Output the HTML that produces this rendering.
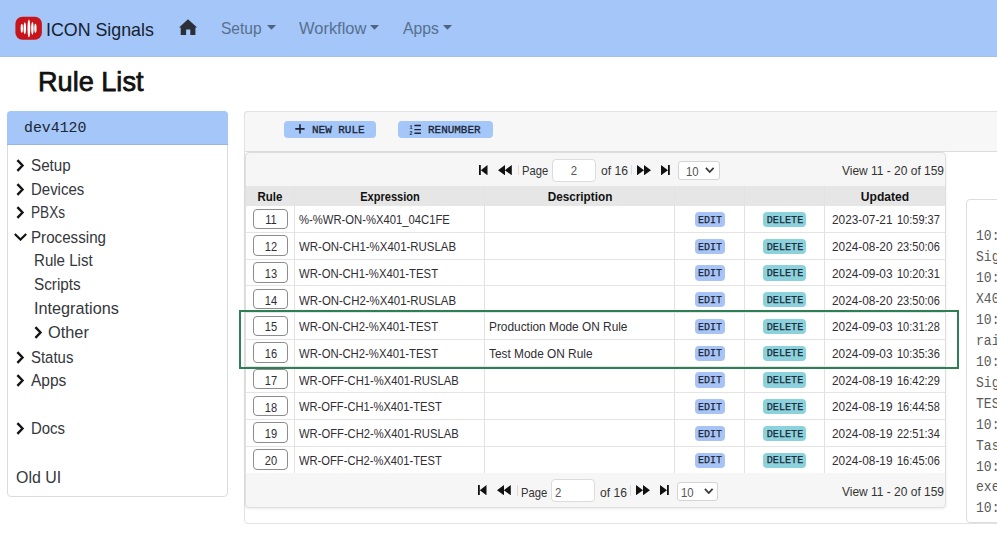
<!DOCTYPE html>
<html><head><meta charset="utf-8"><style>
html,body{margin:0;padding:0;width:997px;height:551px;overflow:hidden;background:#fff;}
.t{position:absolute;white-space:pre;}
.b{position:absolute;}
</style></head><body>
<div class="b" style="left:0.00px;top:0.00px;width:997.00px;height:57.00px;background:#a4c6f8;"></div>
<div class="b" style="left:0.00px;top:56.00px;width:997.00px;height:1.00px;background:#a1c0ef;"></div>
<svg class="b" style="left:15px;top:16px" width="27" height="25" viewBox="0 0 27 25">
<rect x="0.4" y="0.7" width="26.5" height="23.1" rx="7" fill="#c8151c"/>
<g fill="#fff">
<ellipse cx="6.8" cy="12.3" rx="1.15" ry="4.4"/><ellipse cx="9.8" cy="12.3" rx="1.25" ry="6"/><ellipse cx="13.9" cy="12.4" rx="1.4" ry="9"/>
<ellipse cx="17.4" cy="12.3" rx="1.25" ry="6.4"/><ellipse cx="20.4" cy="12.3" rx="1.15" ry="4.6"/>
</g></svg>
<div class="t" style="left:45.50px;top:20.25px;font-family:'Liberation Sans', sans-serif;font-size:17.8px;line-height:21.36px;font-weight:400;color:#17212e;transform:scaleX(1.0016);transform-origin:left center;">ICON Signals</div>
<svg class="b" style="left:179px;top:19px" width="19" height="17" viewBox="0 0 19 17">
<path d="M9 0.3 L18.1 8.6 L16.4 8.6 L16.4 15.9 L11.3 15.9 L11.3 10.6 L7.1 10.6 L7.1 15.9 L1.7 15.9 L1.7 8.6 L0 8.6 Z" fill="#2b3038"/></svg>
<div class="t" style="left:221.20px;top:18.51px;font-family:'Liberation Sans', sans-serif;font-size:17px;line-height:20.40px;font-weight:400;color:#58708f;transform:scaleX(0.9139);transform-origin:left center;">Setup</div>
<svg class="b" style="left:266.6px;top:25.0px" width="9" height="5" viewBox="0 0 9 5"><path d="M0 0 L9 0 L4.5 4.8 Z" fill="#4e6482"/></svg>
<div class="t" style="left:299.00px;top:18.51px;font-family:'Liberation Sans', sans-serif;font-size:17px;line-height:20.40px;font-weight:400;color:#58708f;transform:scaleX(0.9686);transform-origin:left center;">Workflow</div>
<svg class="b" style="left:369.9px;top:25.0px" width="9" height="5" viewBox="0 0 9 5"><path d="M0 0 L9 0 L4.5 4.8 Z" fill="#4e6482"/></svg>
<div class="t" style="left:403.00px;top:18.51px;font-family:'Liberation Sans', sans-serif;font-size:17px;line-height:20.40px;font-weight:400;color:#58708f;transform:scaleX(0.9290);transform-origin:left center;">Apps</div>
<svg class="b" style="left:443.4px;top:25.0px" width="9" height="5" viewBox="0 0 9 5"><path d="M0 0 L9 0 L4.5 4.8 Z" fill="#4e6482"/></svg>
<div class="t" style="left:37.60px;top:65.48px;font-family:'Liberation Sans', sans-serif;font-size:27.6px;line-height:33.12px;font-weight:400;color:#111;-webkit-text-stroke:0.75px #111;transform:scaleX(0.9825);transform-origin:left center;">Rule List</div>
<div class="b" style="left:7.30px;top:111.00px;width:220.30px;height:385.80px;border:1px solid #dcdcdc;border-radius:4px;background:#fff;box-sizing:border-box;"></div>
<div class="b" style="left:7.30px;top:111.00px;width:220.30px;height:33.80px;background:#a4c6f8;border-radius:4px 4px 0 0;border-bottom:1px solid #95b6e6;box-sizing:border-box;"></div>
<div class="t" style="left:23.80px;top:119.85px;font-family:'Liberation Mono', monospace;font-size:14.6px;line-height:17.52px;font-weight:400;color:#1c2733;transform:scaleX(1.0191);transform-origin:left center;">dev4120</div>
<svg class="b" style="left:16.2px;top:158.9px" width="9" height="13" viewBox="0 0 9 13"><path d="M1.4 1.1 L6.5 6.5 L1.4 11.9" fill="none" stroke="#151515" stroke-width="2.4"/></svg>
<div class="t" style="left:30.60px;top:155.90px;font-family:'Liberation Sans', sans-serif;font-size:16.8px;line-height:20.16px;font-weight:400;color:#34373c;transform:scaleX(0.9065);transform-origin:left center;">Setup</div>
<svg class="b" style="left:16.2px;top:182.7px" width="9" height="13" viewBox="0 0 9 13"><path d="M1.4 1.1 L6.5 6.5 L1.4 11.9" fill="none" stroke="#151515" stroke-width="2.4"/></svg>
<div class="t" style="left:30.60px;top:179.70px;font-family:'Liberation Sans', sans-serif;font-size:16.8px;line-height:20.16px;font-weight:400;color:#34373c;transform:scaleX(0.8920);transform-origin:left center;">Devices</div>
<svg class="b" style="left:16.2px;top:205.9px" width="9" height="13" viewBox="0 0 9 13"><path d="M1.4 1.1 L6.5 6.5 L1.4 11.9" fill="none" stroke="#151515" stroke-width="2.4"/></svg>
<div class="t" style="left:30.60px;top:202.90px;font-family:'Liberation Sans', sans-serif;font-size:16.8px;line-height:20.16px;font-weight:400;color:#34373c;transform:scaleX(0.8115);transform-origin:left center;">PBXs</div>
<svg class="b" style="left:13.6px;top:233.0px" width="13" height="8" viewBox="0 0 13 8"><path d="M0.8 1 L6.5 6.6 L12.2 1" fill="none" stroke="#111" stroke-width="2.1"/></svg>
<div class="t" style="left:30.60px;top:227.60px;font-family:'Liberation Sans', sans-serif;font-size:16.8px;line-height:20.16px;font-weight:400;color:#34373c;transform:scaleX(0.9036);transform-origin:left center;">Processing</div>
<div class="t" style="left:33.80px;top:251.10px;font-family:'Liberation Sans', sans-serif;font-size:16.8px;line-height:20.16px;font-weight:400;color:#34373c;transform:scaleX(0.8981);transform-origin:left center;">Rule List</div>
<div class="t" style="left:33.80px;top:274.80px;font-family:'Liberation Sans', sans-serif;font-size:16.8px;line-height:20.16px;font-weight:400;color:#34373c;transform:scaleX(0.9115);transform-origin:left center;">Scripts</div>
<div class="t" style="left:33.80px;top:299.40px;font-family:'Liberation Sans', sans-serif;font-size:16.8px;line-height:20.16px;font-weight:400;color:#34373c;transform:scaleX(0.9671);transform-origin:left center;">Integrations</div>
<svg class="b" style="left:34.2px;top:325.6px" width="9" height="13" viewBox="0 0 9 13"><path d="M1.4 1.1 L6.5 6.5 L1.4 11.9" fill="none" stroke="#151515" stroke-width="2.4"/></svg>
<div class="t" style="left:48.00px;top:322.60px;font-family:'Liberation Sans', sans-serif;font-size:16.8px;line-height:20.16px;font-weight:400;color:#34373c;transform:scaleX(0.9734);transform-origin:left center;">Other</div>
<svg class="b" style="left:16.2px;top:350.7px" width="9" height="13" viewBox="0 0 9 13"><path d="M1.4 1.1 L6.5 6.5 L1.4 11.9" fill="none" stroke="#151515" stroke-width="2.4"/></svg>
<div class="t" style="left:30.60px;top:347.70px;font-family:'Liberation Sans', sans-serif;font-size:16.8px;line-height:20.16px;font-weight:400;color:#34373c;transform:scaleX(0.8902);transform-origin:left center;">Status</div>
<svg class="b" style="left:16.2px;top:374.2px" width="9" height="13" viewBox="0 0 9 13"><path d="M1.4 1.1 L6.5 6.5 L1.4 11.9" fill="none" stroke="#151515" stroke-width="2.4"/></svg>
<div class="t" style="left:30.60px;top:371.20px;font-family:'Liberation Sans', sans-serif;font-size:16.8px;line-height:20.16px;font-weight:400;color:#34373c;transform:scaleX(0.9244);transform-origin:left center;">Apps</div>
<svg class="b" style="left:16.2px;top:422.1px" width="9" height="13" viewBox="0 0 9 13"><path d="M1.4 1.1 L6.5 6.5 L1.4 11.9" fill="none" stroke="#151515" stroke-width="2.4"/></svg>
<div class="t" style="left:30.60px;top:419.10px;font-family:'Liberation Sans', sans-serif;font-size:16.8px;line-height:20.16px;font-weight:400;color:#34373c;transform:scaleX(0.8909);transform-origin:left center;">Docs</div>
<div class="t" style="left:15.50px;top:468.20px;font-family:'Liberation Sans', sans-serif;font-size:16.8px;line-height:20.16px;font-weight:400;color:#34373c;transform:scaleX(0.9494);transform-origin:left center;">Old UI</div>
<div class="b" style="left:244.00px;top:111.00px;width:766.00px;height:413.30px;border:1px solid #e2e2e2;border-radius:4px;background:#fff;box-sizing:border-box;"></div>
<div class="b" style="left:244.00px;top:111.00px;width:766.00px;height:41.00px;background:#f7f7f7;border:1px solid #e2e2e2;border-bottom:1px solid #dcdcdc;border-radius:4px 4px 0 0;box-sizing:border-box;"></div>
<div class="b" style="left:283.80px;top:121.20px;width:92.20px;height:16.40px;background:#a4c6f8;border-radius:4px;"></div>
<svg class="b" style="left:295px;top:124.2px" width="10" height="10" viewBox="0 0 10 10"><path d="M5 0.3 V9.5 M0.3 4.9 H9.6" stroke="#1d2533" stroke-width="1.6"/></svg>
<div class="t" style="left:311.60px;top:123.90px;font-family:'Liberation Mono', monospace;font-size:11.2px;line-height:13.44px;font-weight:400;color:#1a2331;-webkit-text-stroke:0.3px #1a2331;transform:scaleX(0.9783);transform-origin:left center;">NEW RULE</div>
<div class="b" style="left:398.00px;top:121.20px;width:94.50px;height:16.40px;background:#a4c6f8;border-radius:4px;"></div>
<svg class="b" style="left:409px;top:123.5px" width="13" height="12" viewBox="0 0 13 12">
<path d="M5.4 1.5 H11.9 M5.4 5.6 H11.9 M5.4 9.3 H11.9" stroke="#1d2533" stroke-width="1.4"/>
<text x="0.6" y="4.6" font-family="Liberation Mono" font-size="5" font-weight="700" fill="#1d2533">1</text>
<text x="0.6" y="11" font-family="Liberation Mono" font-size="5" font-weight="700" fill="#1d2533">2</text></svg>
<div class="t" style="left:428.10px;top:123.90px;font-family:'Liberation Mono', monospace;font-size:11.2px;line-height:13.44px;font-weight:400;color:#1a2331;-webkit-text-stroke:0.3px #1a2331;transform:scaleX(0.9783);transform-origin:left center;">RENUMBER</div>
<div class="b" style="left:244.90px;top:152.00px;width:701.30px;height:356.20px;border:1px solid #dedede;border-radius:4px;background:#f6f6f6;box-sizing:border-box;box-shadow:0 1px 3px rgba(0,0,0,0.08);"></div>
<div class="b" style="left:245.90px;top:186.30px;width:699.30px;height:19.40px;background:#e6e6e6;"></div>
<div class="b" style="left:245.90px;top:205.70px;width:699.30px;height:267.30px;background:#fff;"></div>
<div class="b" style="left:245.90px;top:231.93px;width:699.30px;height:1.00px;background:#e4e4e4;"></div>
<div class="b" style="left:245.90px;top:258.66px;width:699.30px;height:1.00px;background:#e4e4e4;"></div>
<div class="b" style="left:245.90px;top:285.39px;width:699.30px;height:1.00px;background:#e4e4e4;"></div>
<div class="b" style="left:245.90px;top:312.12px;width:699.30px;height:1.00px;background:#e4e4e4;"></div>
<div class="b" style="left:245.90px;top:338.85px;width:699.30px;height:1.00px;background:#e4e4e4;"></div>
<div class="b" style="left:245.90px;top:365.58px;width:699.30px;height:1.00px;background:#e4e4e4;"></div>
<div class="b" style="left:245.90px;top:392.31px;width:699.30px;height:1.00px;background:#e4e4e4;"></div>
<div class="b" style="left:245.90px;top:419.04px;width:699.30px;height:1.00px;background:#e4e4e4;"></div>
<div class="b" style="left:245.90px;top:445.77px;width:699.30px;height:1.00px;background:#e4e4e4;"></div>
<div class="b" style="left:293.80px;top:186.30px;width:1.00px;height:286.70px;background:#e2e2e2;"></div>
<div class="b" style="left:484.30px;top:186.30px;width:1.00px;height:286.70px;background:#e2e2e2;"></div>
<div class="b" style="left:673.90px;top:186.30px;width:1.00px;height:286.70px;background:#e2e2e2;"></div>
<div class="b" style="left:744.10px;top:186.30px;width:1.00px;height:286.70px;background:#e2e2e2;"></div>
<div class="b" style="left:824.10px;top:186.30px;width:1.00px;height:286.70px;background:#e2e2e2;"></div>
<div class="t" style="left:69.60px;width:400px;text-align:center;top:189.29px;font-family:'Liberation Sans', sans-serif;font-size:12.9px;line-height:15.48px;font-weight:700;color:#111;transform:scaleX(0.8907);transform-origin:center center;">Rule</div>
<div class="t" style="left:189.55px;width:400px;text-align:center;top:189.29px;font-family:'Liberation Sans', sans-serif;font-size:12.9px;line-height:15.48px;font-weight:700;color:#111;transform:scaleX(0.8570);transform-origin:center center;">Expression</div>
<div class="t" style="left:379.60px;width:400px;text-align:center;top:189.29px;font-family:'Liberation Sans', sans-serif;font-size:12.9px;line-height:15.48px;font-weight:700;color:#111;transform:scaleX(0.9117);transform-origin:center center;">Description</div>
<div class="t" style="left:685.40px;width:400px;text-align:center;top:189.29px;font-family:'Liberation Sans', sans-serif;font-size:12.9px;line-height:15.48px;font-weight:700;color:#111;transform:scaleX(0.9379);transform-origin:center center;">Updated</div>
<div class="b" style="left:252.60px;top:208.60px;width:35.00px;height:20.50px;border:1px solid #8c8c8c;border-radius:4px;box-sizing:border-box;background:#fff;"></div>
<div class="t" style="left:70.50px;width:400px;text-align:center;top:213.47px;font-family:'Liberation Sans', sans-serif;font-size:12.6px;line-height:15.12px;font-weight:400;color:#302d33;transform:scaleX(0.8800);transform-origin:center center;">11</div>
<div class="t" style="left:298.60px;top:213.38px;font-family:'Liberation Sans', sans-serif;font-size:12.7px;line-height:15.24px;font-weight:400;color:#302d33;transform:scaleX(0.8878);transform-origin:left center;">%-%WR-ON-%X401_04C1FE</div>
<div class="b" style="left:694.50px;top:212.00px;width:30.50px;height:15.20px;background:#a8c4f6;border-radius:4px;"></div>
<div class="t" style="left:509.75px;width:400px;text-align:center;top:213.82px;font-family:'Liberation Mono', monospace;font-size:11.4px;line-height:13.68px;font-weight:400;color:#1a2533;-webkit-text-stroke:0.25px #1a2533;transform:scaleX(0.8760);transform-origin:center center;">EDIT</div>
<div class="b" style="left:763.00px;top:212.00px;width:43.00px;height:15.20px;background:#8cd2dd;border-radius:4px;"></div>
<div class="t" style="left:584.50px;width:400px;text-align:center;top:213.82px;font-family:'Liberation Mono', monospace;font-size:11.4px;line-height:13.68px;font-weight:400;color:#1a2533;-webkit-text-stroke:0.25px #1a2533;transform:scaleX(0.8900);transform-origin:center center;">DELETE</div>
<div class="t" style="left:831.60px;top:213.38px;font-family:'Liberation Sans', sans-serif;font-size:12.7px;line-height:15.24px;font-weight:400;color:#302d33;transform:scaleX(0.9328);transform-origin:left center;">2023-07-21</div>
<div class="t" style="left:897.30px;top:213.38px;font-family:'Liberation Sans', sans-serif;font-size:12.7px;line-height:15.24px;font-weight:400;color:#302d33;transform:scaleX(0.8658);transform-origin:left center;">10:59:37</div>
<div class="b" style="left:252.60px;top:235.33px;width:35.00px;height:20.50px;border:1px solid #8c8c8c;border-radius:4px;box-sizing:border-box;background:#fff;"></div>
<div class="t" style="left:70.50px;width:400px;text-align:center;top:240.20px;font-family:'Liberation Sans', sans-serif;font-size:12.6px;line-height:15.12px;font-weight:400;color:#302d33;transform:scaleX(0.8800);transform-origin:center center;">12</div>
<div class="t" style="left:298.60px;top:240.11px;font-family:'Liberation Sans', sans-serif;font-size:12.7px;line-height:15.24px;font-weight:400;color:#302d33;transform:scaleX(0.9024);transform-origin:left center;">WR-ON-CH1-%X401-RUSLAB</div>
<div class="b" style="left:694.50px;top:238.73px;width:30.50px;height:15.20px;background:#a8c4f6;border-radius:4px;"></div>
<div class="t" style="left:509.75px;width:400px;text-align:center;top:240.55px;font-family:'Liberation Mono', monospace;font-size:11.4px;line-height:13.68px;font-weight:400;color:#1a2533;-webkit-text-stroke:0.25px #1a2533;transform:scaleX(0.8760);transform-origin:center center;">EDIT</div>
<div class="b" style="left:763.00px;top:238.73px;width:43.00px;height:15.20px;background:#8cd2dd;border-radius:4px;"></div>
<div class="t" style="left:584.50px;width:400px;text-align:center;top:240.55px;font-family:'Liberation Mono', monospace;font-size:11.4px;line-height:13.68px;font-weight:400;color:#1a2533;-webkit-text-stroke:0.25px #1a2533;transform:scaleX(0.8900);transform-origin:center center;">DELETE</div>
<div class="t" style="left:831.60px;top:240.11px;font-family:'Liberation Sans', sans-serif;font-size:12.7px;line-height:15.24px;font-weight:400;color:#302d33;transform:scaleX(0.9328);transform-origin:left center;">2024-08-20</div>
<div class="t" style="left:897.30px;top:240.11px;font-family:'Liberation Sans', sans-serif;font-size:12.7px;line-height:15.24px;font-weight:400;color:#302d33;transform:scaleX(0.8658);transform-origin:left center;">23:50:06</div>
<div class="b" style="left:252.60px;top:262.06px;width:35.00px;height:20.50px;border:1px solid #8c8c8c;border-radius:4px;box-sizing:border-box;background:#fff;"></div>
<div class="t" style="left:70.50px;width:400px;text-align:center;top:266.93px;font-family:'Liberation Sans', sans-serif;font-size:12.6px;line-height:15.12px;font-weight:400;color:#302d33;transform:scaleX(0.8800);transform-origin:center center;">13</div>
<div class="t" style="left:298.60px;top:266.84px;font-family:'Liberation Sans', sans-serif;font-size:12.7px;line-height:15.24px;font-weight:400;color:#302d33;transform:scaleX(0.8926);transform-origin:left center;">WR-ON-CH1-%X401-TEST</div>
<div class="b" style="left:694.50px;top:265.46px;width:30.50px;height:15.20px;background:#a8c4f6;border-radius:4px;"></div>
<div class="t" style="left:509.75px;width:400px;text-align:center;top:267.28px;font-family:'Liberation Mono', monospace;font-size:11.4px;line-height:13.68px;font-weight:400;color:#1a2533;-webkit-text-stroke:0.25px #1a2533;transform:scaleX(0.8760);transform-origin:center center;">EDIT</div>
<div class="b" style="left:763.00px;top:265.46px;width:43.00px;height:15.20px;background:#8cd2dd;border-radius:4px;"></div>
<div class="t" style="left:584.50px;width:400px;text-align:center;top:267.28px;font-family:'Liberation Mono', monospace;font-size:11.4px;line-height:13.68px;font-weight:400;color:#1a2533;-webkit-text-stroke:0.25px #1a2533;transform:scaleX(0.8900);transform-origin:center center;">DELETE</div>
<div class="t" style="left:831.60px;top:266.84px;font-family:'Liberation Sans', sans-serif;font-size:12.7px;line-height:15.24px;font-weight:400;color:#302d33;transform:scaleX(0.9328);transform-origin:left center;">2024-09-03</div>
<div class="t" style="left:897.30px;top:266.84px;font-family:'Liberation Sans', sans-serif;font-size:12.7px;line-height:15.24px;font-weight:400;color:#302d33;transform:scaleX(0.8658);transform-origin:left center;">10:20:31</div>
<div class="b" style="left:252.60px;top:288.79px;width:35.00px;height:20.50px;border:1px solid #8c8c8c;border-radius:4px;box-sizing:border-box;background:#fff;"></div>
<div class="t" style="left:70.50px;width:400px;text-align:center;top:293.66px;font-family:'Liberation Sans', sans-serif;font-size:12.6px;line-height:15.12px;font-weight:400;color:#302d33;transform:scaleX(0.8800);transform-origin:center center;">14</div>
<div class="t" style="left:298.60px;top:293.57px;font-family:'Liberation Sans', sans-serif;font-size:12.7px;line-height:15.24px;font-weight:400;color:#302d33;transform:scaleX(0.9024);transform-origin:left center;">WR-ON-CH2-%X401-RUSLAB</div>
<div class="b" style="left:694.50px;top:292.19px;width:30.50px;height:15.20px;background:#a8c4f6;border-radius:4px;"></div>
<div class="t" style="left:509.75px;width:400px;text-align:center;top:294.01px;font-family:'Liberation Mono', monospace;font-size:11.4px;line-height:13.68px;font-weight:400;color:#1a2533;-webkit-text-stroke:0.25px #1a2533;transform:scaleX(0.8760);transform-origin:center center;">EDIT</div>
<div class="b" style="left:763.00px;top:292.19px;width:43.00px;height:15.20px;background:#8cd2dd;border-radius:4px;"></div>
<div class="t" style="left:584.50px;width:400px;text-align:center;top:294.01px;font-family:'Liberation Mono', monospace;font-size:11.4px;line-height:13.68px;font-weight:400;color:#1a2533;-webkit-text-stroke:0.25px #1a2533;transform:scaleX(0.8900);transform-origin:center center;">DELETE</div>
<div class="t" style="left:831.60px;top:293.57px;font-family:'Liberation Sans', sans-serif;font-size:12.7px;line-height:15.24px;font-weight:400;color:#302d33;transform:scaleX(0.9328);transform-origin:left center;">2024-08-20</div>
<div class="t" style="left:897.30px;top:293.57px;font-family:'Liberation Sans', sans-serif;font-size:12.7px;line-height:15.24px;font-weight:400;color:#302d33;transform:scaleX(0.8658);transform-origin:left center;">23:50:06</div>
<div class="b" style="left:252.60px;top:315.52px;width:35.00px;height:20.50px;border:1px solid #8c8c8c;border-radius:4px;box-sizing:border-box;background:#fff;"></div>
<div class="t" style="left:70.50px;width:400px;text-align:center;top:320.39px;font-family:'Liberation Sans', sans-serif;font-size:12.6px;line-height:15.12px;font-weight:400;color:#302d33;transform:scaleX(0.8800);transform-origin:center center;">15</div>
<div class="t" style="left:298.60px;top:320.30px;font-family:'Liberation Sans', sans-serif;font-size:12.7px;line-height:15.24px;font-weight:400;color:#302d33;transform:scaleX(0.8926);transform-origin:left center;">WR-ON-CH2-%X401-TEST</div>
<div class="t" style="left:489.00px;top:320.30px;font-family:'Liberation Sans', sans-serif;font-size:12.7px;line-height:15.24px;font-weight:400;color:#302d33;transform:scaleX(0.9350);transform-origin:left center;">Production Mode ON Rule</div>
<div class="b" style="left:694.50px;top:318.92px;width:30.50px;height:15.20px;background:#a8c4f6;border-radius:4px;"></div>
<div class="t" style="left:509.75px;width:400px;text-align:center;top:320.74px;font-family:'Liberation Mono', monospace;font-size:11.4px;line-height:13.68px;font-weight:400;color:#1a2533;-webkit-text-stroke:0.25px #1a2533;transform:scaleX(0.8760);transform-origin:center center;">EDIT</div>
<div class="b" style="left:763.00px;top:318.92px;width:43.00px;height:15.20px;background:#8cd2dd;border-radius:4px;"></div>
<div class="t" style="left:584.50px;width:400px;text-align:center;top:320.74px;font-family:'Liberation Mono', monospace;font-size:11.4px;line-height:13.68px;font-weight:400;color:#1a2533;-webkit-text-stroke:0.25px #1a2533;transform:scaleX(0.8900);transform-origin:center center;">DELETE</div>
<div class="t" style="left:831.60px;top:320.30px;font-family:'Liberation Sans', sans-serif;font-size:12.7px;line-height:15.24px;font-weight:400;color:#302d33;transform:scaleX(0.9328);transform-origin:left center;">2024-09-03</div>
<div class="t" style="left:897.30px;top:320.30px;font-family:'Liberation Sans', sans-serif;font-size:12.7px;line-height:15.24px;font-weight:400;color:#302d33;transform:scaleX(0.8658);transform-origin:left center;">10:31:28</div>
<div class="b" style="left:252.60px;top:342.25px;width:35.00px;height:20.50px;border:1px solid #8c8c8c;border-radius:4px;box-sizing:border-box;background:#fff;"></div>
<div class="t" style="left:70.50px;width:400px;text-align:center;top:347.12px;font-family:'Liberation Sans', sans-serif;font-size:12.6px;line-height:15.12px;font-weight:400;color:#302d33;transform:scaleX(0.8800);transform-origin:center center;">16</div>
<div class="t" style="left:298.60px;top:347.03px;font-family:'Liberation Sans', sans-serif;font-size:12.7px;line-height:15.24px;font-weight:400;color:#302d33;transform:scaleX(0.8926);transform-origin:left center;">WR-ON-CH2-%X401-TEST</div>
<div class="t" style="left:489.00px;top:347.03px;font-family:'Liberation Sans', sans-serif;font-size:12.7px;line-height:15.24px;font-weight:400;color:#302d33;transform:scaleX(0.9350);transform-origin:left center;">Test Mode ON Rule</div>
<div class="b" style="left:694.50px;top:345.65px;width:30.50px;height:15.20px;background:#a8c4f6;border-radius:4px;"></div>
<div class="t" style="left:509.75px;width:400px;text-align:center;top:347.47px;font-family:'Liberation Mono', monospace;font-size:11.4px;line-height:13.68px;font-weight:400;color:#1a2533;-webkit-text-stroke:0.25px #1a2533;transform:scaleX(0.8760);transform-origin:center center;">EDIT</div>
<div class="b" style="left:763.00px;top:345.65px;width:43.00px;height:15.20px;background:#8cd2dd;border-radius:4px;"></div>
<div class="t" style="left:584.50px;width:400px;text-align:center;top:347.47px;font-family:'Liberation Mono', monospace;font-size:11.4px;line-height:13.68px;font-weight:400;color:#1a2533;-webkit-text-stroke:0.25px #1a2533;transform:scaleX(0.8900);transform-origin:center center;">DELETE</div>
<div class="t" style="left:831.60px;top:347.03px;font-family:'Liberation Sans', sans-serif;font-size:12.7px;line-height:15.24px;font-weight:400;color:#302d33;transform:scaleX(0.9328);transform-origin:left center;">2024-09-03</div>
<div class="t" style="left:897.30px;top:347.03px;font-family:'Liberation Sans', sans-serif;font-size:12.7px;line-height:15.24px;font-weight:400;color:#302d33;transform:scaleX(0.8658);transform-origin:left center;">10:35:36</div>
<div class="b" style="left:252.60px;top:368.98px;width:35.00px;height:20.50px;border:1px solid #8c8c8c;border-radius:4px;box-sizing:border-box;background:#fff;"></div>
<div class="t" style="left:70.50px;width:400px;text-align:center;top:373.85px;font-family:'Liberation Sans', sans-serif;font-size:12.6px;line-height:15.12px;font-weight:400;color:#302d33;transform:scaleX(0.8800);transform-origin:center center;">17</div>
<div class="t" style="left:298.60px;top:373.76px;font-family:'Liberation Sans', sans-serif;font-size:12.7px;line-height:15.24px;font-weight:400;color:#302d33;transform:scaleX(0.8846);transform-origin:left center;">WR-OFF-CH1-%X401-RUSLAB</div>
<div class="b" style="left:694.50px;top:372.38px;width:30.50px;height:15.20px;background:#a8c4f6;border-radius:4px;"></div>
<div class="t" style="left:509.75px;width:400px;text-align:center;top:374.20px;font-family:'Liberation Mono', monospace;font-size:11.4px;line-height:13.68px;font-weight:400;color:#1a2533;-webkit-text-stroke:0.25px #1a2533;transform:scaleX(0.8760);transform-origin:center center;">EDIT</div>
<div class="b" style="left:763.00px;top:372.38px;width:43.00px;height:15.20px;background:#8cd2dd;border-radius:4px;"></div>
<div class="t" style="left:584.50px;width:400px;text-align:center;top:374.20px;font-family:'Liberation Mono', monospace;font-size:11.4px;line-height:13.68px;font-weight:400;color:#1a2533;-webkit-text-stroke:0.25px #1a2533;transform:scaleX(0.8900);transform-origin:center center;">DELETE</div>
<div class="t" style="left:831.60px;top:373.76px;font-family:'Liberation Sans', sans-serif;font-size:12.7px;line-height:15.24px;font-weight:400;color:#302d33;transform:scaleX(0.9328);transform-origin:left center;">2024-08-19</div>
<div class="t" style="left:897.30px;top:373.76px;font-family:'Liberation Sans', sans-serif;font-size:12.7px;line-height:15.24px;font-weight:400;color:#302d33;transform:scaleX(0.8658);transform-origin:left center;">16:42:29</div>
<div class="b" style="left:252.60px;top:395.71px;width:35.00px;height:20.50px;border:1px solid #8c8c8c;border-radius:4px;box-sizing:border-box;background:#fff;"></div>
<div class="t" style="left:70.50px;width:400px;text-align:center;top:400.58px;font-family:'Liberation Sans', sans-serif;font-size:12.6px;line-height:15.12px;font-weight:400;color:#302d33;transform:scaleX(0.8800);transform-origin:center center;">18</div>
<div class="t" style="left:298.60px;top:400.49px;font-family:'Liberation Sans', sans-serif;font-size:12.7px;line-height:15.24px;font-weight:400;color:#302d33;transform:scaleX(0.8805);transform-origin:left center;">WR-OFF-CH1-%X401-TEST</div>
<div class="b" style="left:694.50px;top:399.11px;width:30.50px;height:15.20px;background:#a8c4f6;border-radius:4px;"></div>
<div class="t" style="left:509.75px;width:400px;text-align:center;top:400.93px;font-family:'Liberation Mono', monospace;font-size:11.4px;line-height:13.68px;font-weight:400;color:#1a2533;-webkit-text-stroke:0.25px #1a2533;transform:scaleX(0.8760);transform-origin:center center;">EDIT</div>
<div class="b" style="left:763.00px;top:399.11px;width:43.00px;height:15.20px;background:#8cd2dd;border-radius:4px;"></div>
<div class="t" style="left:584.50px;width:400px;text-align:center;top:400.93px;font-family:'Liberation Mono', monospace;font-size:11.4px;line-height:13.68px;font-weight:400;color:#1a2533;-webkit-text-stroke:0.25px #1a2533;transform:scaleX(0.8900);transform-origin:center center;">DELETE</div>
<div class="t" style="left:831.60px;top:400.49px;font-family:'Liberation Sans', sans-serif;font-size:12.7px;line-height:15.24px;font-weight:400;color:#302d33;transform:scaleX(0.9328);transform-origin:left center;">2024-08-19</div>
<div class="t" style="left:897.30px;top:400.49px;font-family:'Liberation Sans', sans-serif;font-size:12.7px;line-height:15.24px;font-weight:400;color:#302d33;transform:scaleX(0.8658);transform-origin:left center;">16:44:58</div>
<div class="b" style="left:252.60px;top:422.44px;width:35.00px;height:20.50px;border:1px solid #8c8c8c;border-radius:4px;box-sizing:border-box;background:#fff;"></div>
<div class="t" style="left:70.50px;width:400px;text-align:center;top:427.31px;font-family:'Liberation Sans', sans-serif;font-size:12.6px;line-height:15.12px;font-weight:400;color:#302d33;transform:scaleX(0.8800);transform-origin:center center;">19</div>
<div class="t" style="left:298.60px;top:427.22px;font-family:'Liberation Sans', sans-serif;font-size:12.7px;line-height:15.24px;font-weight:400;color:#302d33;transform:scaleX(0.8846);transform-origin:left center;">WR-OFF-CH2-%X401-RUSLAB</div>
<div class="b" style="left:694.50px;top:425.84px;width:30.50px;height:15.20px;background:#a8c4f6;border-radius:4px;"></div>
<div class="t" style="left:509.75px;width:400px;text-align:center;top:427.66px;font-family:'Liberation Mono', monospace;font-size:11.4px;line-height:13.68px;font-weight:400;color:#1a2533;-webkit-text-stroke:0.25px #1a2533;transform:scaleX(0.8760);transform-origin:center center;">EDIT</div>
<div class="b" style="left:763.00px;top:425.84px;width:43.00px;height:15.20px;background:#8cd2dd;border-radius:4px;"></div>
<div class="t" style="left:584.50px;width:400px;text-align:center;top:427.66px;font-family:'Liberation Mono', monospace;font-size:11.4px;line-height:13.68px;font-weight:400;color:#1a2533;-webkit-text-stroke:0.25px #1a2533;transform:scaleX(0.8900);transform-origin:center center;">DELETE</div>
<div class="t" style="left:831.60px;top:427.22px;font-family:'Liberation Sans', sans-serif;font-size:12.7px;line-height:15.24px;font-weight:400;color:#302d33;transform:scaleX(0.9328);transform-origin:left center;">2024-08-19</div>
<div class="t" style="left:897.30px;top:427.22px;font-family:'Liberation Sans', sans-serif;font-size:12.7px;line-height:15.24px;font-weight:400;color:#302d33;transform:scaleX(0.8658);transform-origin:left center;">22:51:34</div>
<div class="b" style="left:252.60px;top:449.17px;width:35.00px;height:20.50px;border:1px solid #8c8c8c;border-radius:4px;box-sizing:border-box;background:#fff;"></div>
<div class="t" style="left:70.50px;width:400px;text-align:center;top:454.04px;font-family:'Liberation Sans', sans-serif;font-size:12.6px;line-height:15.12px;font-weight:400;color:#302d33;transform:scaleX(0.8800);transform-origin:center center;">20</div>
<div class="t" style="left:298.60px;top:453.95px;font-family:'Liberation Sans', sans-serif;font-size:12.7px;line-height:15.24px;font-weight:400;color:#302d33;transform:scaleX(0.8805);transform-origin:left center;">WR-OFF-CH2-%X401-TEST</div>
<div class="b" style="left:694.50px;top:452.57px;width:30.50px;height:15.20px;background:#a8c4f6;border-radius:4px;"></div>
<div class="t" style="left:509.75px;width:400px;text-align:center;top:454.39px;font-family:'Liberation Mono', monospace;font-size:11.4px;line-height:13.68px;font-weight:400;color:#1a2533;-webkit-text-stroke:0.25px #1a2533;transform:scaleX(0.8760);transform-origin:center center;">EDIT</div>
<div class="b" style="left:763.00px;top:452.57px;width:43.00px;height:15.20px;background:#8cd2dd;border-radius:4px;"></div>
<div class="t" style="left:584.50px;width:400px;text-align:center;top:454.39px;font-family:'Liberation Mono', monospace;font-size:11.4px;line-height:13.68px;font-weight:400;color:#1a2533;-webkit-text-stroke:0.25px #1a2533;transform:scaleX(0.8900);transform-origin:center center;">DELETE</div>
<div class="t" style="left:831.60px;top:453.95px;font-family:'Liberation Sans', sans-serif;font-size:12.7px;line-height:15.24px;font-weight:400;color:#302d33;transform:scaleX(0.9328);transform-origin:left center;">2024-08-19</div>
<div class="t" style="left:897.30px;top:453.95px;font-family:'Liberation Sans', sans-serif;font-size:12.7px;line-height:15.24px;font-weight:400;color:#302d33;transform:scaleX(0.8658);transform-origin:left center;">16:45:06</div>
<svg class="b" style="left:478.5px;top:165.00px" width="9" height="10.3" viewBox="0 0 9 10.3"><path d="M0 0 H1.8 V10.3 H0 Z M8.5 0 L1.8 5.15 L8.5 10.3 Z" fill="#111"/></svg>
<svg class="b" style="left:497.6px;top:165.00px" width="14" height="10.3" viewBox="0 0 14 10.3"><path d="M7 0 L0 5.15 L7 10.3 Z M13.8 0 L6.8 5.15 L13.8 10.3 Z" fill="#111"/></svg>
<div class="b" style="left:517.60px;top:165.15px;width:1.00px;height:10.30px;background:#dcdcdc;"></div>
<div class="t" style="left:521.50px;top:164.17px;font-family:'Liberation Sans', sans-serif;font-size:12.6px;line-height:15.12px;font-weight:400;color:#333;transform:scaleX(0.8903);transform-origin:left center;">Page</div>
<div class="b" style="left:551.70px;top:158.60px;width:44.80px;height:23.20px;background:#fff;border:1px solid #dcdcdc;border-radius:4px;box-sizing:border-box;"></div>
<div class="t" style="left:374.10px;width:400px;text-align:center;top:164.17px;font-family:'Liberation Sans', sans-serif;font-size:12.6px;line-height:15.12px;font-weight:400;color:#555;transform:scaleX(0.9000);transform-origin:center center;">2</div>
<div class="t" style="left:601.00px;top:164.17px;font-family:'Liberation Sans', sans-serif;font-size:12.6px;line-height:15.12px;font-weight:400;color:#333;transform:scaleX(0.9635);transform-origin:left center;">of 16</div>
<div class="b" style="left:631.00px;top:165.15px;width:1.00px;height:10.30px;background:#dcdcdc;"></div>
<svg class="b" style="left:637.0px;top:165.00px" width="14" height="10.3" viewBox="0 0 14 10.3"><path d="M0 0 L7 5.15 L0 10.3 Z M7 0 L14 5.15 L7 10.3 Z" fill="#111"/></svg>
<svg class="b" style="left:661.3px;top:165.00px" width="9" height="10.3" viewBox="0 0 9 10.3"><path d="M0 0 L7 5.15 L0 10.3 Z M7 0 H8.8 V10.3 H7 Z" fill="#111"/></svg>
<div class="b" style="left:677.50px;top:160.80px;width:42.20px;height:19.20px;background:#fff;border:1px solid #d4d4d4;border-radius:3px;box-sizing:border-box;"></div>
<div class="t" style="left:686.00px;top:164.57px;font-family:'Liberation Sans', sans-serif;font-size:12.6px;line-height:15.12px;font-weight:400;color:#555;transform:scaleX(0.9000);transform-origin:left center;">10</div>
<svg class="b" style="left:705.3px;top:166.95px" width="9.5" height="6.6" viewBox="0 0 9.5 6.6"><path d="M0.9 0.9 L4.75 5.0 L8.6 0.9" fill="none" stroke="#3a3a3a" stroke-width="1.8"/></svg>
<div class="t" style="left:543.80px;width:400px;text-align:right;top:163.97px;font-family:'Liberation Sans', sans-serif;font-size:12.6px;line-height:15.12px;font-weight:400;color:#333;transform:scaleX(0.9500);transform-origin:right center;">View 11 - 20 of 159</div>
<svg class="b" style="left:477.5px;top:485.15px" width="9" height="10.3" viewBox="0 0 9 10.3"><path d="M0 0 H1.8 V10.3 H0 Z M8.5 0 L1.8 5.15 L8.5 10.3 Z" fill="#111"/></svg>
<svg class="b" style="left:496.6px;top:485.15px" width="14" height="10.3" viewBox="0 0 14 10.3"><path d="M7 0 L0 5.15 L7 10.3 Z M13.8 0 L6.8 5.15 L13.8 10.3 Z" fill="#111"/></svg>
<div class="b" style="left:516.60px;top:485.30px;width:1.00px;height:10.30px;background:#dcdcdc;"></div>
<div class="t" style="left:520.50px;top:485.67px;font-family:'Liberation Sans', sans-serif;font-size:12.6px;line-height:15.12px;font-weight:400;color:#333;transform:scaleX(0.8903);transform-origin:left center;">Page</div>
<div class="b" style="left:550.50px;top:479.20px;width:44.70px;height:23.00px;background:#fff;border:1px solid #dcdcdc;border-radius:4px;box-sizing:border-box;"></div>
<div class="t" style="left:554.80px;top:485.67px;font-family:'Liberation Sans', sans-serif;font-size:12.6px;line-height:15.12px;font-weight:400;color:#555;transform:scaleX(0.9000);transform-origin:left center;">2</div>
<div class="t" style="left:600.00px;top:485.67px;font-family:'Liberation Sans', sans-serif;font-size:12.6px;line-height:15.12px;font-weight:400;color:#333;transform:scaleX(0.9635);transform-origin:left center;">of 16</div>
<div class="b" style="left:630.00px;top:485.30px;width:1.00px;height:10.30px;background:#dcdcdc;"></div>
<svg class="b" style="left:636.0px;top:485.15px" width="14" height="10.3" viewBox="0 0 14 10.3"><path d="M0 0 L7 5.15 L0 10.3 Z M7 0 L14 5.15 L7 10.3 Z" fill="#111"/></svg>
<svg class="b" style="left:660.3px;top:485.15px" width="9" height="10.3" viewBox="0 0 9 10.3"><path d="M0 0 L7 5.15 L0 10.3 Z M7 0 H8.8 V10.3 H7 Z" fill="#111"/></svg>
<div class="b" style="left:676.60px;top:482.00px;width:41.90px;height:18.60px;background:#fff;border:1px solid #d4d4d4;border-radius:3px;box-sizing:border-box;"></div>
<div class="t" style="left:681.30px;top:486.07px;font-family:'Liberation Sans', sans-serif;font-size:12.6px;line-height:15.12px;font-weight:400;color:#555;transform:scaleX(0.9000);transform-origin:left center;">10</div>
<svg class="b" style="left:704.1px;top:487.85px" width="9.5" height="6.6" viewBox="0 0 9.5 6.6"><path d="M0.9 0.9 L4.75 5.0 L8.6 0.9" fill="none" stroke="#3a3a3a" stroke-width="1.8"/></svg>
<div class="t" style="left:543.80px;width:400px;text-align:right;top:485.27px;font-family:'Liberation Sans', sans-serif;font-size:12.6px;line-height:15.12px;font-weight:400;color:#333;transform:scaleX(0.9500);transform-origin:right center;">View 11 - 20 of 159</div>
<div class="b" style="left:239.00px;top:310.00px;width:720.00px;height:59.00px;border:2px solid #2e7f55;box-sizing:border-box;"></div>
<div class="b" style="left:965.90px;top:199.40px;width:44.10px;height:324.00px;border:1px solid #dddddd;border-radius:4px;background:#fff;box-sizing:border-box;"></div>
<div class="t" style="left:976.30px;top:228.07px;font-family:'Liberation Mono', monospace;font-size:14px;line-height:16.80px;font-weight:400;color:#5a5a5a;transform:scaleX(0.9300);transform-origin:left center;">10:31:28</div>
<div class="t" style="left:976.30px;top:249.02px;font-family:'Liberation Mono', monospace;font-size:14px;line-height:16.80px;font-weight:400;color:#5a5a5a;transform:scaleX(0.9300);transform-origin:left center;">Signal</div>
<div class="t" style="left:976.30px;top:269.97px;font-family:'Liberation Mono', monospace;font-size:14px;line-height:16.80px;font-weight:400;color:#5a5a5a;transform:scaleX(0.9300);transform-origin:left center;">10:31:28</div>
<div class="t" style="left:976.30px;top:290.92px;font-family:'Liberation Mono', monospace;font-size:14px;line-height:16.80px;font-weight:400;color:#5a5a5a;transform:scaleX(0.9300);transform-origin:left center;">X401</div>
<div class="t" style="left:976.30px;top:311.87px;font-family:'Liberation Mono', monospace;font-size:14px;line-height:16.80px;font-weight:400;color:#5a5a5a;transform:scaleX(0.9300);transform-origin:left center;">10:31:28</div>
<div class="t" style="left:976.30px;top:332.82px;font-family:'Liberation Mono', monospace;font-size:14px;line-height:16.80px;font-weight:400;color:#5a5a5a;transform:scaleX(0.9300);transform-origin:left center;">raise</div>
<div class="t" style="left:976.30px;top:353.77px;font-family:'Liberation Mono', monospace;font-size:14px;line-height:16.80px;font-weight:400;color:#5a5a5a;transform:scaleX(0.9300);transform-origin:left center;">10:35:36</div>
<div class="t" style="left:976.30px;top:374.72px;font-family:'Liberation Mono', monospace;font-size:14px;line-height:16.80px;font-weight:400;color:#5a5a5a;transform:scaleX(0.9300);transform-origin:left center;">Signal</div>
<div class="t" style="left:976.30px;top:395.67px;font-family:'Liberation Mono', monospace;font-size:14px;line-height:16.80px;font-weight:400;color:#5a5a5a;transform:scaleX(0.9300);transform-origin:left center;">TEST</div>
<div class="t" style="left:976.30px;top:416.62px;font-family:'Liberation Mono', monospace;font-size:14px;line-height:16.80px;font-weight:400;color:#5a5a5a;transform:scaleX(0.9300);transform-origin:left center;">10:35:36</div>
<div class="t" style="left:976.30px;top:437.57px;font-family:'Liberation Mono', monospace;font-size:14px;line-height:16.80px;font-weight:400;color:#5a5a5a;transform:scaleX(0.9300);transform-origin:left center;">Task</div>
<div class="t" style="left:976.30px;top:458.52px;font-family:'Liberation Mono', monospace;font-size:14px;line-height:16.80px;font-weight:400;color:#5a5a5a;transform:scaleX(0.9300);transform-origin:left center;">10:35:36</div>
<div class="t" style="left:976.30px;top:479.47px;font-family:'Liberation Mono', monospace;font-size:14px;line-height:16.80px;font-weight:400;color:#5a5a5a;transform:scaleX(0.9300);transform-origin:left center;">execute</div>
<div class="t" style="left:976.30px;top:500.42px;font-family:'Liberation Mono', monospace;font-size:14px;line-height:16.80px;font-weight:400;color:#5a5a5a;transform:scaleX(0.9300);transform-origin:left center;">10:35:36</div>
</body></html>
